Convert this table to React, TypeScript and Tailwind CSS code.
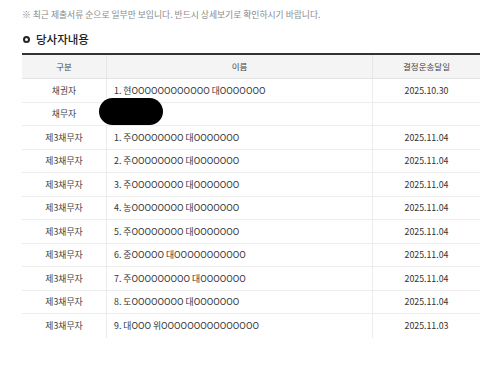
import React from "react";

const rows: [string, string, string][] = [
  ["채권자", "1. 현OOOOOOOOOOOO 대OOOOOOO", "2025.10.30"],
  ["채무자", "", ""],
  ["제3채무자", "1. 주OOOOOOOO 대OOOOOOO", "2025.11.04"],
  ["제3채무자", "2. 주OOOOOOOO 대OOOOOOO", "2025.11.04"],
  ["제3채무자", "3. 주OOOOOOOO 대OOOOOOO", "2025.11.04"],
  ["제3채무자", "4. 농OOOOOOOO 대OOOOOOO", "2025.11.04"],
  ["제3채무자", "5. 주OOOOOOOO 대OOOOOOO", "2025.11.04"],
  ["제3채무자", "6. 중OOOOO 대OOOOOOOOOOO", "2025.11.04"],
  ["제3채무자", "7. 주OOOOOOOOO 대OOOOOOO", "2025.11.04"],
  ["제3채무자", "8. 도OOOOOOOO 대OOOOOOO", "2025.11.04"],
  ["제3채무자", "9. 대OOO 위OOOOOOOOOOOOOOO", "2025.11.03"],
];

export default function App() {
  return (
    <div
      className="w-[480px] h-[377px] bg-white overflow-hidden relative"
      style={{ fontFamily: '"Noto Sans CJK KR", "Noto Sans", sans-serif' }}
    >
      <div className="pl-[22px] pt-[8px] text-[8.8px] text-[#8a8a8a] leading-[14px]">
        ※ 최근 제출서류 순으로 일부만 보입니다. 반드시 상세보기로 확인하시기 바랍니다.
      </div>
      <div className="pl-[23px] mt-[9px] flex items-center gap-[6px] h-[16px]">
        <span className="w-[7px] h-[7px] rounded-full border-[2px] border-[#222]" />
        <span className="text-[11.5px] font-medium text-[#222] leading-[16px]">당사자내용</span>
      </div>
      <div className="ml-[22px] mt-[6px] border-t-[2px] border-[#333]">
        <div className="grid grid-cols-[84px_266px_1fr] h-[24px] bg-[#f4f4f4] border-b border-[#e2e2e2] text-[8.5px] text-[#444] items-center">
          <div className="text-center">구분</div>
          <div className="text-center h-full flex items-center justify-center border-l border-[#e6e6e6]">이름</div>
          <div className="text-center h-full flex items-center justify-center border-l border-[#e6e6e6]">결정운송달일</div>
        </div>
        {rows.map((r, i) => (
          <div
            key={i}
            className={`grid grid-cols-[84px_266px_1fr] h-[23.5px] text-[8.8px] text-[#333] items-center ${i < rows.length - 1 ? "border-b border-[#ececec]" : ""}`}
          >
            <div className="text-center text-[#444]">{r[0]}</div>
            <div className="h-full flex items-center pl-[7px] border-l border-[#ececec]">{r[1]}</div>
            <div className="h-full flex items-center justify-center border-l border-[#ececec]">{r[2]}</div>
          </div>
        ))}
      </div>
      <div className="absolute left-[99px] top-[98px] w-[64px] h-[27px] bg-black rounded-[14px]" />
    </div>
  );
}
